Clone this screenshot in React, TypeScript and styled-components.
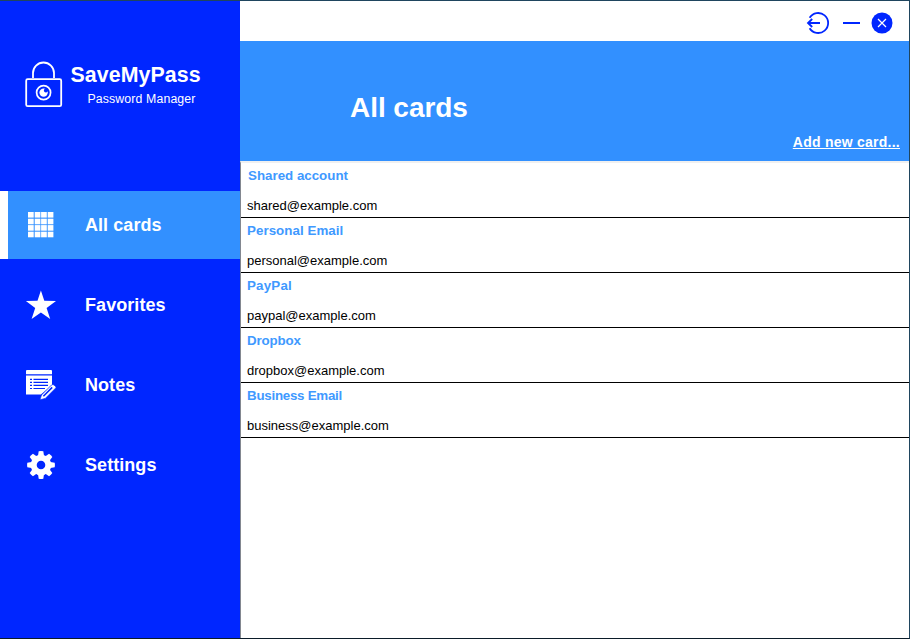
import React from "react";
import styled, { createGlobalStyle } from "styled-components";

const Global = createGlobalStyle`
  * { box-sizing: border-box; }
  body { margin: 0; font-family: "Liberation Sans", Arial, sans-serif; overflow: hidden; }
`;

const Window = styled.div`
  width: 910px;
  height: 639px;
  display: flex;
  background: #fff;
  border-top: 1px solid #1f455e;
  border-right: 1px solid #1f455e;
  border-bottom: 1px solid #0b1c29;
`;

const Sidebar = styled.aside`
  width: 240px;
  flex: none;
  background: #0026ff;
  color: #fff;
`;

const Brand = styled.header`
  height: 190px;
  padding: 60px 0 0 24px;
  display: flex;
`;

const BrandText = styled.div`
  padding: 1px 0 0 7.5px;
`;

const BrandName = styled.div`
  font-size: 21.33px;
  line-height: 26px;
  font-weight: bold;
  white-space: nowrap;
  letter-spacing: 0.1px;
`;

const Tagline = styled.div`
  padding-left: 17px;
  font-size: 12.3px;
  line-height: 22px;
  letter-spacing: 0.13px;
`;

const Nav = styled.nav`
  display: flex;
  flex-direction: column;
  gap: 12px;
`;

const NavItem = styled.div<{ $active?: boolean }>`
  height: 68px;
  display: flex;
  align-items: center;
  padding-left: 17px;
  border-left: 8px solid ${(p) => (p.$active ? "#fff" : "#0026ff")};
  background: ${(p) => (p.$active ? "#3290ff" : "transparent")};
`;

const NavLabel = styled.span`
  margin-left: 28px;
  font-size: 18px;
  line-height: 22px;
  font-weight: bold;
  letter-spacing: 0.06px;
`;

const Main = styled.main`
  flex: 1;
  display: flex;
  flex-direction: column;
`;

const TitleBar = styled.div`
  height: 40px;
  display: flex;
  justify-content: flex-end;
  align-items: center;
  padding: 3px 16px 0 0;
  gap: 11px;
`;

const Banner = styled.div`
  height: 120px;
  background: #3290ff;
  color: #fff;
  display: flex;
  flex-direction: column;
`;

const Heading = styled.h1`
  margin: 51px 0 0 110px;
  font-size: 28px;
  line-height: 32px;
  letter-spacing: -0.05px;
`;

const AddLink = styled.a`
  align-self: flex-end;
  margin: 10px 9px 0 0;
  font-size: 14px;
  line-height: 16px;
  font-weight: bold;
  text-decoration: underline;
  text-decoration-skip-ink: none;
  letter-spacing: 0.25px;
`;

const CardList = styled.ul`
  flex: 1;
  margin: 0;
  padding: 0;
  list-style: none;
  border-left: 1px solid #828790;
  border-top: 2px solid #f0f0f0;
`;

const Card = styled.li`
  height: 55px;
  padding: 5px 0 0 6px;
  border-bottom: 1px solid #000;
`;

const CardTitle = styled.div<{ $indent?: boolean; $tracking?: number }>`
  padding-left: ${(p) => (p.$indent ? 1 : 0)}px;
  color: #4099ff;
  font-size: 13.33px;
  line-height: 16px;
  font-weight: bold;
  letter-spacing: ${(p) => p.$tracking ?? 0}px;
`;

const CardEmail = styled.div`
  margin-top: 14px;
  color: #000;
  font-size: 13px;
  line-height: 16px;
`;

const LockLogo = () => (
  <svg width="39" height="48" viewBox="24 61 39 48" fill="none" stroke="#fff">
    <path d="M33 78v-5a10.5 10.5 0 0 1 21 0v5" strokeWidth="1.8" />
    <rect x="26.2" y="79.2" width="35" height="27" rx="1.5" strokeWidth="1.8" />
    <circle cx="43.6" cy="92.6" r="7" strokeWidth="1.7" />
    <circle cx="43.6" cy="92.6" r="4.2" fill="#fff" stroke="none" />
    <circle cx="45.9" cy="90.4" r="2" fill="#0026ff" stroke="none" />
  </svg>
);

const GridIcon = () => (
  <svg width="32" height="32" viewBox="0 0 32 32" fill="#fff">
    {[3, 9.7, 16.1, 22.7].map((y) =>
      [3, 9.7, 16.1, 22.7].map((x) => <rect key={`${x}-${y}`} x={x} y={y} width="5.7" height="5.6" />)
    )}
  </svg>
);

const StarIcon = () => (
  <svg width="32" height="32" viewBox="0 0 32 32" fill="#fff">
    <path d="M15.9 1.6 19.3 11.8 31 12 21.6 19.1 25.2 30 15.9 23.6 6.6 30 10.2 19.1.9 12l11.6-.2z" />
  </svg>
);

const NotesIcon = () => (
  <svg width="32" height="32" viewBox="0 0 32 32">
    <path d="M1 5.2V2q0-1 1-1h24q1 0 1 1v3.2zM1 6.5h26v10L15.8 25.5H1z" fill="#fff" />
    <path d="M5 10.4h2m1.5 0H23M5 13.4h2m1.5 0H23M5 16.4h2m1.5 0H23M5 19.5h2m1.5 0H20" stroke="#0026ff" strokeWidth="1.2" />
    <path d="m26.5 16-10 10-1.6 4.8 5.4-1.4L31 18.7q.2-1.2-2-2.7-1-1-2.5 0z" fill="#fff" stroke="#0026ff" strokeWidth=".7" />
    <path d="m18.4 27.2 8.8-8.8" stroke="#0026ff" strokeWidth="1.5" />
  </svg>
);

const GearIcon = () => (
  <svg width="32" height="32" viewBox="-16 -16 32 32">
    {[0, 45, 90, 135, 180, 225, 270, 315].map((angle) => (
      <path key={angle} transform={`rotate(${angle})`} d="M-3.2-8 -2.3-13.7Q0-14.2 2.3-13.7L3.2-8z" fill="#fff" />
    ))}
    <circle r="7.3" fill="none" stroke="#fff" strokeWidth="6" />
  </svg>
);

const LogoutIcon = () => (
  <svg width="24" height="24" viewBox="0 0 24 24" fill="none" stroke="#0026ff" strokeWidth="1.8">
    <path d="M3.6 6.8a10 10 0 1 1 0 10.4M14 12H2M6.2 8 2 12l4.2 4" />
  </svg>
);

const MinimizeIcon = () => (
  <svg width="19" height="24" viewBox="0 0 19 24">
    <path d="M2 12h17" stroke="#0026ff" strokeWidth="2" />
  </svg>
);

const CloseIcon = () => (
  <svg width="22" height="24" viewBox="0 0 22 24">
    <circle cx="11" cy="12" r="10.5" fill="#0026ff" />
    <path d="m7 8 8 8m0-8-8 8" stroke="#fff" strokeWidth="1.2" />
  </svg>
);

const navigation = [
  { label: "All cards", Icon: GridIcon },
  { label: "Favorites", Icon: StarIcon },
  { label: "Notes", Icon: NotesIcon },
  { label: "Settings", Icon: GearIcon },
];

const cards = [
  { title: "Shared account", email: "shared@example.com" },
  { title: "Personal Email", email: "personal@example.com", tracking: 0.05 },
  { title: "PayPal", email: "paypal@example.com", tracking: 0.2 },
  { title: "Dropbox", email: "dropbox@example.com", tracking: -0.15 },
  { title: "Business Email", email: "business@example.com", tracking: -0.25 },
];

export default function App() {
  return (
    <>
      <Global />
      <Window>
        <Sidebar>
          <Brand>
            <LockLogo />
            <BrandText>
              <BrandName>SaveMyPass</BrandName>
              <Tagline>Password Manager</Tagline>
            </BrandText>
          </Brand>
          <Nav>
            {navigation.map(({ label, Icon }, i) => (
              <NavItem key={label} $active={i === 0}>
                <Icon />
                <NavLabel>{label}</NavLabel>
              </NavItem>
            ))}
          </Nav>
        </Sidebar>
        <Main>
          <TitleBar>
            <LogoutIcon />
            <MinimizeIcon />
            <CloseIcon />
          </TitleBar>
          <Banner>
            <Heading>All cards</Heading>
            <AddLink>Add new card...</AddLink>
          </Banner>
          <CardList>
            {cards.map((card, i) => (
              <Card key={card.title}>
                <CardTitle $indent={i === 0} $tracking={card.tracking}>
                  {card.title}
                </CardTitle>
                <CardEmail>{card.email}</CardEmail>
              </Card>
            ))}
          </CardList>
        </Main>
      </Window>
    </>
  );
}
